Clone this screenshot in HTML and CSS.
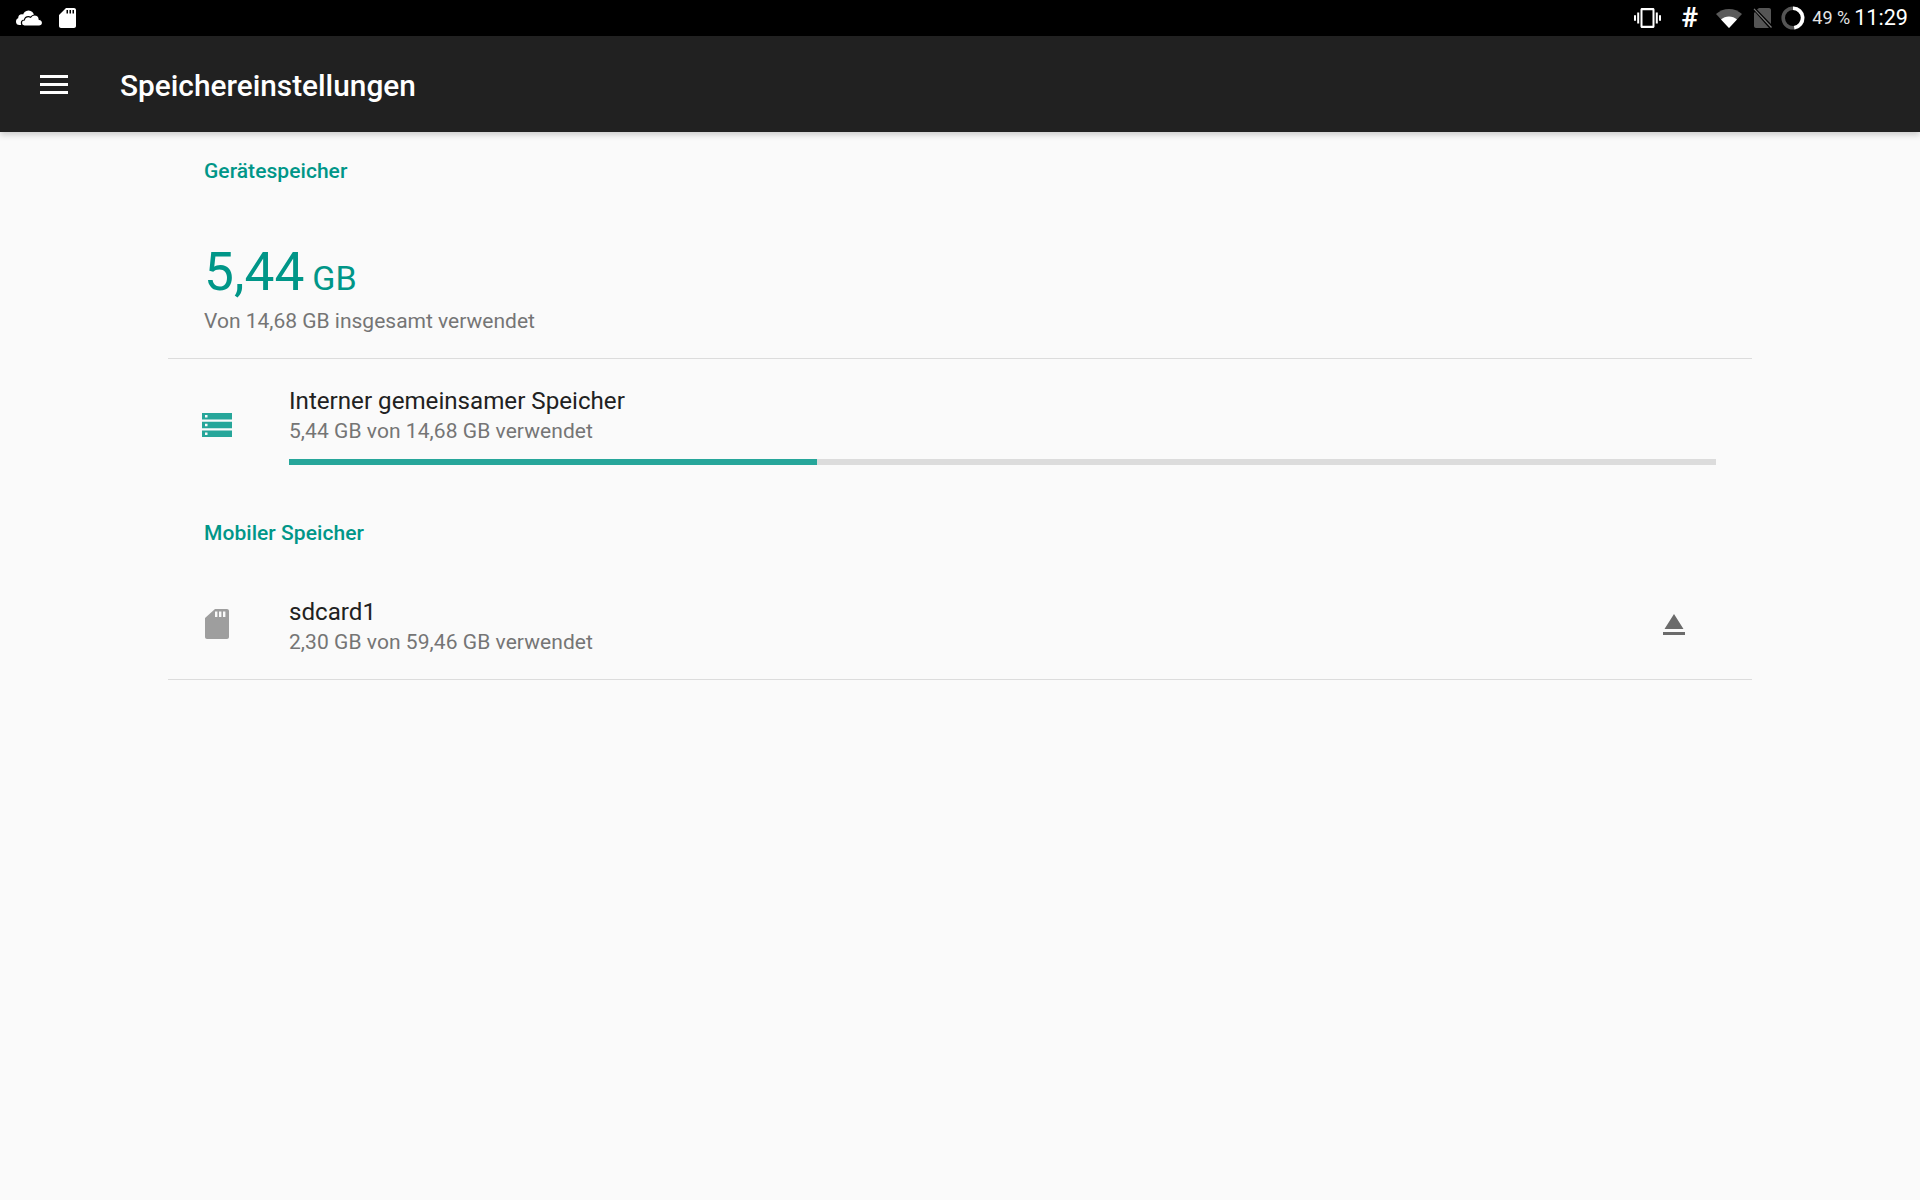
FILE: index.html
```html
<!DOCTYPE html>
<html lang="de">
<head>
<meta charset="utf-8">
<title>Speichereinstellungen</title>
<link rel="stylesheet" href="styles.css">
</head>
<body>
<div class="status">
  <div class="status-left">
    <svg class="i-cloud" viewBox="0 0 26 16"><g fill="#fff"><circle cx="12.500" cy="6" r="5.500"/><circle cx="6" cy="8" r="3.800"/><circle cx="3.500" cy="11.500" r="3.500"/><rect x="3" y="8" width="12" height="7"/></g><path fill="#fff" stroke="#000" stroke-width="1.200" d="M8.500 16c-1.800 0-3.100-1.300-3.100-3 0-1.700 1.300-3 3-3 .3-2 2-3.300 4-3.300.8 0 1.500.2 2.100.6C15.500 5.900 17 5 18.600 5c2.500 0 4.500 1.900 4.600 4.300 1.700.2 3.300 1.400 3.300 3.500 0 2-1.500 3.200-3.300 3.200z"/></svg>
    <svg class="i-sd" viewBox="0 0 17 20"><path fill="#fff" fill-rule="evenodd" d="M7 0h8c1.100 0 2 .9 2 2v16c0 1.100-.9 2-2 2H2c-1.100 0-2-.9-2-2V7zM7.500 2v3.500H9V2zM10.500 2v3.500H12V2zM13.500 2v3.500H15V2z"/></svg>
  </div>
  <div class="status-right">
    <svg class="i-vib" viewBox="0 0 27 20"><path fill="#fff" fill-rule="evenodd" d="M8 0h11c.9 0 1.500.6 1.500 1.500v17c0 .9-.6 1.500-1.500 1.500H8c-.9 0-1.500-.6-1.500-1.500v-17C6.500.6 7.100 0 8 0zm.5 2.200v15.600h10V2.200zM3.200 4.500h2v11h-2zM21.800 4.500h2v11h-2zM0 7.200h2v5.600H0zM25 7.200h2v5.600h-2z"/></svg>
    <span class="hash">#</span>
    <svg class="i-wifi" viewBox="0 0 26 19"><path fill="#5a5a5a" d="M13 0C8 0 3.500 1.900 0 5l13 14L26 5C22.500 1.900 18 0 13 0z"/><path fill="#fff" d="M5 10.400C7.200 8.500 10 7.400 13 7.400s5.800 1.100 8 3L13 19z"/></svg>
    <svg class="i-sim" viewBox="0 0 19 20"><path fill="#555" d="M6 0h10c1.100 0 2 .9 2 2v14L4 1.500zM2 4l14 16H3c-1.100 0-2-.9-2-2V5z"/><path stroke="#777" stroke-width="1.200" d="M1 .8 18.500 19.500"/></svg>
    <svg class="i-batt" viewBox="0 0 24 24"><circle cx="12" cy="12" r="9.800" fill="none" stroke="#555" stroke-width="3.600"/><path d="M12 2.200a9.800 9.800 0 0 1 1.200 19.500" fill="none" stroke="#fff" stroke-width="3.600"/></svg>
    <span class="pct">49 %</span>
    <span class="clock">11:29</span>
  </div>
</div>
<header class="toolbar">
  <div class="burger"><span></span><span></span><span></span></div>
  <h1 class="title">Speichereinstellungen</h1>
</header>
<main class="content">
  <h2 class="label label-first">Gerätespeicher</h2>
  <div class="summary">
    <div class="big"><span class="big-num">5,44</span> <span class="big-unit">GB</span></div>
    <div class="sub">Von 14,68 GB insgesamt verwendet</div>
  </div>
  <div class="row row-internal">
    <div class="icon-cell">
      <svg class="i-storage" viewBox="0 0 30 24"><path fill="#26a69a" fill-rule="evenodd" d="M0 0h30v6.500H0zM3 2v2.500h2.500V2zM0 8.800h30v6.500H0zM3 10.800v2.500h2.500v-2.500zM0 17.500h30V24H0zM3 19.500V22h2.500v-2.500z"/></svg>
    </div>
    <div class="text-cell">
      <div class="name">Interner gemeinsamer Speicher</div>
      <div class="sub sub-row">5,44 GB von 14,68 GB verwendet</div>
      <div class="bar"><div class="bar-fill" style="width:37%"></div></div>
    </div>
  </div>
  <h2 class="label label-second">Mobiler Speicher</h2>
  <div class="row row-sd">
    <div class="icon-cell">
      <svg class="i-sdgray" viewBox="0 0 24 30"><path fill="#9e9e9e" fill-rule="evenodd" d="M10 0h12c1.100 0 2 .9 2 2v26c0 1.100-.9 2-2 2H2c-1.100 0-2-.9-2-2V9zM10 2.500V8h2.400V2.500zM14 2.500V8h2.400V2.500zM18 2.500V8h2.400V2.500z"/></svg>
    </div>
    <div class="text-cell">
      <div class="name">sdcard1</div>
      <div class="sub sub-row">2,30 GB von 59,46 GB verwendet</div>
    </div>
    <svg class="i-eject" viewBox="0 0 22 21"><path fill="#6b6b6b" d="M11 0l9.500 15H1.500zM0 18h22v3H0z"/></svg>
  </div>
</main>
</body>
</html>
```
FILE: styles.css
```css
* { box-sizing: border-box; }
html, body { margin: 0; padding: 0; }
body {
  width: 1920px;
  height: 1200px;
  background: #fafafa;
  font-family: Roboto, "Liberation Sans", sans-serif;
  overflow: hidden;
}
.status {
  height: 36px;
  background: #000;
  display: flex;
  justify-content: space-between;
  align-items: center;
  padding: 0 12px 0 16px;
}
.status-left, .status-right { display: flex; align-items: center; }
.i-cloud { width: 26px; height: 16px; margin-right: 17px; }
.i-sd { width: 17px; height: 20px; margin-bottom: 1px; }
.i-vib { width: 27px; height: 20px; margin-right: 19px; }
.hash { color: #fff; font-size: 28px; font-weight: 700; line-height: 36px; width: 19px; margin-right: 17px; text-align: center; }
.i-wifi { width: 26px; height: 19px; margin-right: 11px; }
.i-sim { width: 19px; height: 20px; margin-right: 9px; }
.i-batt { width: 24px; height: 24px; margin-right: 7px; }
.pct { color: #e4e4e4; font-size: 18px; line-height: 36px; margin-right: 4px; }
.clock { color: #fff; font-size: 21.600px; line-height: 36px; }
.toolbar {
  height: 96px;
  background: #212121;
  display: flex;
  align-items: center;
  padding-left: 40px;
  box-shadow: 0 3px 6px rgba(0,0,0,.18);
  position: relative;
}
.burger { width: 28px; display: flex; flex-direction: column; gap: 5px; margin-right: 52px; }
.burger span { height: 3px; background: #fff; display: block; }
.title { margin: 0; color: #fff; font-size: 29.800px; font-weight: 500; line-height: 36px; position: relative; top: 2px; }
.content { margin: 0 168px; }
.label {
  margin: 0;
  font-size: 21px;
  font-weight: 500;
  line-height: 24px;
  color: #009688;
  padding-left: 36px;
  letter-spacing: .05px;
}
.label-first { padding-top: 27px; }
.label-second { padding-top: 56px; }
.summary {
  padding: 0 0 22px 36px;
  border-bottom: 1.500px solid #dcdcdc;
}
.big { color: #009688; line-height: 66px; margin-top: 56px; height: 66px; white-space: nowrap; }
.big-num { font-size: 53.300px; }
.big-unit { font-size: 34px; margin-left: 4px; }
.sub { color: #757575; font-size: 21px; line-height: 30px; margin-top: 1px; }
.sub-row { margin-top: 0; letter-spacing: .06px; }
.row { display: flex; align-items: flex-start; }
.row-internal { padding-top: 26.500px; }
.row-sd { padding-top: 52px; height: 135px; border-bottom: 1.500px solid #dcdcdc; }
.icon-cell { width: 121px; flex: none; padding-left: 34px; }
.text-cell { flex: 1; padding-right: 36px; }
.name { color: #212121; font-size: 24.150px; line-height: 30px; }
.i-storage { width: 30px; height: 24px; display: block; margin-top: 27.500px; }
.i-sdgray { width: 24px; height: 30px; display: block; margin-top: 12px; margin-left: 3px; }
.i-eject { width: 22px; height: 21px; flex: none; margin: 17px 67px 0 0; }
.bar { height: 6px; background: #dcdcdc; margin-top: 13.500px; }
.bar-fill { height: 100%; background: #26a69a; }
```
